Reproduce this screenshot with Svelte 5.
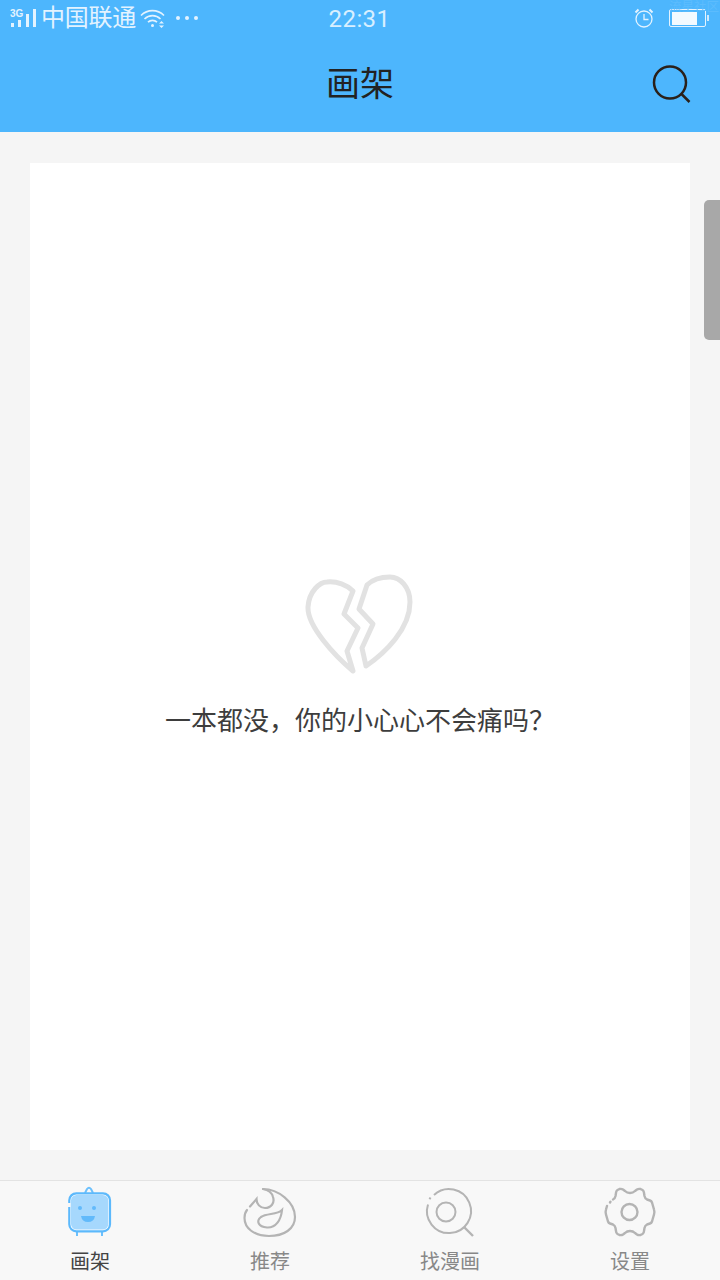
<script>
  const tabs = [
    { label: '画架', active: true },
    { label: '推荐' },
    { label: '找漫画' },
    { label: '设置' }
  ];
</script>

<div class="page">
  <header class="top">
    <div class="status">
      <div class="left">
        <svg class="signal" width="28" height="24" viewBox="0 0 28 24">
          <text x="0" y="12" class="g3">3G</text>
          <rect x="1" y="18" width="3" height="4" fill="#e3f3ff"/>
          <rect x="8" y="15" width="3" height="7" fill="#e3f3ff"/>
          <rect x="16" y="9" width="3" height="13" fill="#e3f3ff"/>
          <rect x="23" y="4" width="3" height="18" fill="#e3f3ff"/>
        </svg>
        <span class="carrier">中国联通</span>
        <svg class="wifi" width="26" height="20" viewBox="0 0 26 20" fill="none" stroke="#e3f3ff" stroke-width="1.6">
          <path d="M1 7.5C7.5 1 17.5 1 24 7.5"/>
          <path d="M4.5 11C9 6.5 16 6.5 20.5 11"/>
          <path d="M8 14.2C10.5 11.8 14.5 11.8 17 14.2"/>
          <circle cx="12.5" cy="17.5" r="1.5" fill="#e3f3ff" stroke="none"/>
          <path d="M19 15.5l2.5-2.5 2.5 2.5zM19 17.5l2.5 2.5 2.5-2.5z" fill="#e3f3ff" stroke="none"/>
        </svg>
        <span class="dots"><i></i><i></i><i></i></span>
      </div>
      <span class="time">22:31</span>
      <div class="right">
        <svg class="clock" width="20" height="20" viewBox="0 0 20 20" fill="none" stroke="#e3f3ff" stroke-width="1.3">
          <circle cx="10" cy="11" r="8"/>
          <path d="M10 6v5.5h4.5"/>
          <path d="M1.5 4.5l3-3M18.500 4.500l-3-3" stroke-width="2"/>
        </svg>
        <div class="battery"><div class="fill"></div></div>
        <span class="nub"></span>
      </div>
      <span class="mark">流星社区</span>
    </div>
    <div class="bar">
      <h1>画架</h1>
      <svg class="search" width="40" height="40" viewBox="0 0 40 40" fill="none" stroke="#2a2019" stroke-width="2.5">
        <circle cx="19" cy="18.500" r="16"/>
        <path d="M30.500 30l8 8"/>
      </svg>
    </div>
  </header>

  <main>
    <section class="card">
      <svg class="heart" width="110" height="100" viewBox="0 0 110 100" fill="none" stroke="#e2e2e2" stroke-width="5" stroke-linejoin="round" stroke-linecap="round">
        <path d="M48 17L39 40L53 54L42 77L48 97C30 82 2 52 3 33C4 17 15 8 22 8C32 7 42 11 48 17Z"/>
        <path d="M62 11L54 35L68 50L57 74L61 92C80 79 105 55 105 28C105 13 95 3 85 3C76 3 68 5 62 11Z"/>
      </svg>
      <p>一本都没，你的小心心不会痛吗？</p>
    </section>
  </main>

  <div class="handle"></div>

  <nav>
    {#each tabs as tab, i}
      <div class="tab" class:active={tab.active}>
        {#if i === 0}
          <svg width="60" height="60" viewBox="0 0 60 60" fill="none">
            <path d="M25 11L27 7Q29 4.500 31 7L33 11" stroke="#6cc0fc" stroke-width="2"/>
            <path d="M17 49v5M42 49v5" stroke="#6cc0fc" stroke-width="2"/>
            <rect x="9.300" y="11.300" width="40.700" height="38" rx="7" fill="#fff" stroke="#5cb9fc" stroke-width="2.200"/>
            <rect x="11" y="13" width="37.300" height="34.600" rx="5.500" fill="#a6d8fd"/>
            <path d="M9.300 21v4" stroke="#f8f8f8" stroke-width="2.600"/>
            <circle cx="20" cy="26" r="2" fill="#62bafb"/>
            <circle cx="34" cy="26" r="2" fill="#62bafb"/>
            <path d="M21 34H35Q34 40 28 40T21 34Z" fill="#62bafb"/>
          </svg>
        {:else if i === 1}
          <svg width="60" height="60" viewBox="0 0 60 60" fill="none" stroke="#b4b4b4" stroke-width="2.200" stroke-linecap="round">
            <path d="M23 7C38 7 55 20 55 35C55 47 44 54 29 54C14 54 4.500 46 4.500 36Q4.500 31 7 28"/>
            <path d="M10 24.500L16.500 17C16.500 22 20 26 25 26C31 26 35 21 33 15C32 11 28 8 23 7"/>
            <path d="M42 28C37 33 27 31 21 35C16 39 18 45 27 45.500C36 46 41 38 42 28Z"/>
          </svg>
        {:else if i === 2}
          <svg width="60" height="60" viewBox="0 0 60 60" fill="none" stroke="#b4b4b4" stroke-width="2">
            <path d="M14 13A22 22 0 1 1 8 22.500"/>
            <path d="M10.500 15.500l-1 1.700"/>
            <circle cx="26" cy="30" r="9.500"/>
            <path d="M44 45l9 9" stroke-width="2.400"/>
          </svg>
        {:else}
          <svg width="60" height="60" viewBox="0 0 60 60" fill="none" stroke="#b4b4b4" stroke-width="2.400" stroke-linecap="round" stroke-linejoin="round">
            <path d="M13 17.500Q15 16.500 15.500 14L16 11Q16 9 17.500 8L19.500 7Q21.500 6.500 23 7.500L25 9Q27 11 30 11Q33 11 35 9L37 7.500Q38.500 6.500 40.500 7L42.500 8Q44 9 44 11L44.500 14Q45 16.500 47 17.500L50 18.500Q51.500 19 52 20.500L54 27.500Q54.800 30 54 32.500L52 39.500Q51.500 41 50 41.500L47 42.500Q45 43.500 44.500 46L44 49Q44 51 42.500 52L40.500 53Q38.500 53.500 37 52.500L35 51Q33 49 30 49Q27 49 25 51L23 52.500Q21.500 53.500 19.500 53L17.500 52Q16 51 16 49L15.500 46Q15 43.500 13 42.500L10 41.500Q8.500 41 8 39.500L6 32.500Q5.200 30 6 27.500L7 24"/>
            <path d="M10 20.500l.5-.8"/>
            <circle cx="29.500" cy="30" r="8"/>
          </svg>
        {/if}
        <span>{tab.label}</span>
      </div>
    {/each}
  </nav>
</div>

<style>
  :global(body) {
    margin: 0;
    font-family: "Noto Sans CJK SC", "Liberation Sans", sans-serif;
  }
  .page {
    position: relative;
    width: 720px;
    height: 1280px;
    background: #f5f5f5;
    display: flex;
    flex-direction: column;
    overflow: hidden;
  }
  .top {
    height: 132px;
    background: #4db6fd;
    flex: none;
  }
  .status {
    position: relative;
    height: 36px;
    display: flex;
    align-items: center;
    justify-content: space-between;
    color: #e3f3ff;
  }
  .left {
    display: flex;
    align-items: center;
    padding-left: 10px;
  }
  .signal {
    margin-top: -2px;
  }
  .g3 {
    font: 700 10px "Liberation Sans", sans-serif;
    fill: #e3f3ff;
  }
  .carrier {
    font-family: "Liberation Sans", "Noto Sans CJK SC", sans-serif;
    font-size: 24px;
    line-height: 32px;
    margin: 0 0 0 3px;
    letter-spacing: -0.25px;
  }
  .wifi {
    margin-left: 4px;
    margin-top: -1px;
  }
  .dots {
    display: flex;
    gap: 5px;
    margin-left: 10px;
    margin-top: -1px;
  }
  .dots i {
    width: 4px;
    height: 4px;
    border-radius: 50%;
    background: #e3f3ff;
  }
  .time {
    position: absolute;
    left: 0;
    right: 0;
    top: 0;
    text-align: center;
    font: 24px/38px "Roboto", sans-serif;
    letter-spacing: 0.4px;
    color: #d8efff;
    margin-left: -1px;
  }
  .right {
    display: flex;
    align-items: center;
    padding-right: 11px;
  }
  .clock {
    margin-top: -1px;
    transform: translateX(-1px);
  }
  .battery {
    width: 37px;
    height: 18px;
    box-sizing: border-box;
    margin-left: 14px;
    border: 1.500px solid #e3f3ff;
    border-radius: 2px;
    padding: 1.500px;
    display: flex;
  }
  .fill {
    width: 25px;
    background: #f3faff;
  }
  .nub {
    width: 2px;
    height: 6px;
    margin-left: 1px;
    background: #cfeaff;
  }
  .mark {
    position: absolute;
    right: 1px;
    top: 1px;
    font-family: "Liberation Sans", "Noto Sans CJK SC", sans-serif;
    font-size: 12.500px;
    line-height: 13px;
    color: #5cbcfd;
  }
  .bar {
    position: relative;
    height: 96px;
    display: flex;
    align-items: center;
    justify-content: center;
  }
  h1 {
    margin: 0;
    font-size: 34px;
    font-weight: 400;
    color: #222;
    transform: translateY(-3px);
  }
  .search {
    position: absolute;
    right: 29px;
    top: 28px;
  }
  main {
    flex: 1;
    padding: 31px 30px 30px;
    display: flex;
    min-height: 0;
  }
  .card {
    flex: 1;
    background: #fff;
    display: flex;
    flex-direction: column;
    align-items: center;
    padding-top: 411px;
    box-sizing: border-box;
  }
  p {
    margin: 27px 0 0;
    font-size: 26px;
    line-height: 36px;
    font-weight: 400;
    color: #3d3d3d;
  }
  .handle {
    position: absolute;
    right: 0;
    top: 200px;
    width: 16px;
    height: 140px;
    background: #a8a8a8;
    border-radius: 5px 0 0 5px;
  }
  nav {
    height: 100px;
    flex: none;
    box-sizing: border-box;
    border-top: 1px solid #e3e3e3;
    background: #f8f8f8;
    display: grid;
    grid-template-columns: repeat(4, 180px);
  }
  .tab {
    display: flex;
    flex-direction: column;
    align-items: center;
    color: #888;
    font-size: 20px;
    line-height: 26px;
  }
  .tab svg {
    margin-top: 1px;
    display: block;
  }
  .tab span {
    margin-top: 6px;
  }
  .tab.active {
    color: #444;
  }
</style>
